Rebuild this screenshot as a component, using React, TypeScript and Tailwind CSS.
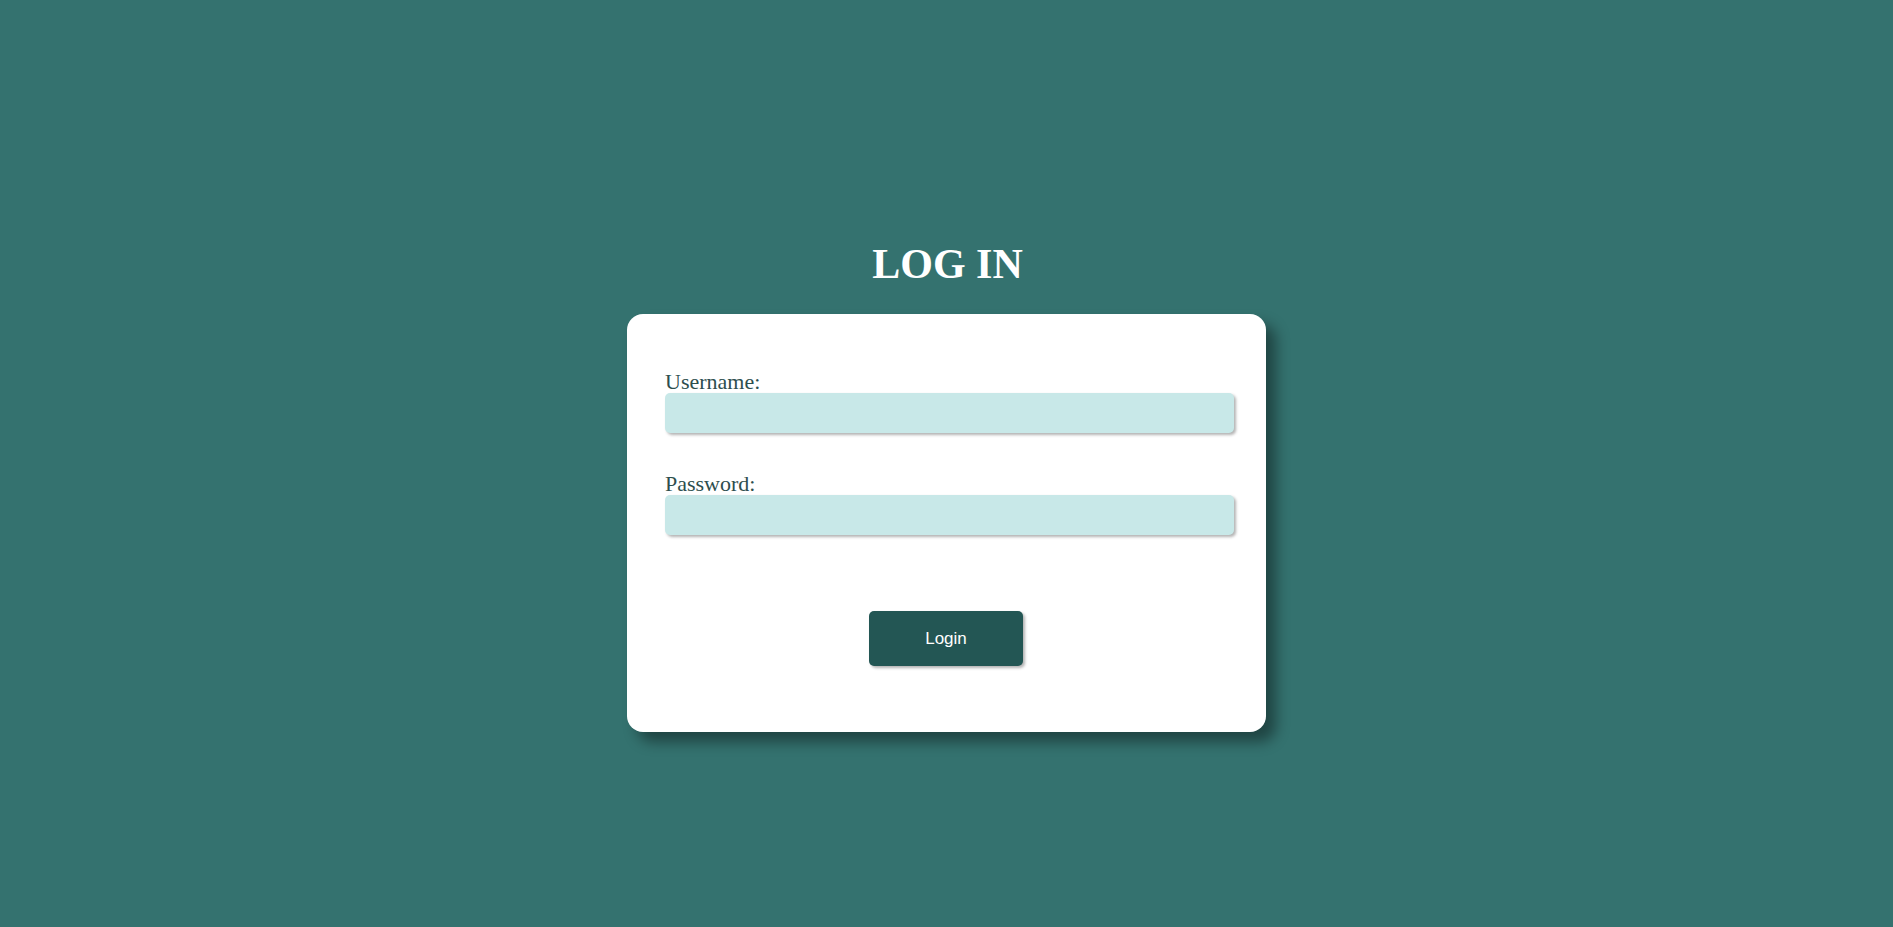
import { useState } from 'react'

export default function App() {
  const [username, setUsername] = useState('')
  const [password, setPassword] = useState('')

  return (
    <div
      className="min-h-screen w-full bg-[#34726f] flex flex-col items-center pt-[240px]"
      style={{ fontFamily: 'Georgia, "Liberation Serif", serif' }}
    >
      <h1 className="text-white font-bold text-[42px] leading-[48px] m-0 pl-[2px]">LOG IN</h1>

      <form
        className="mt-[26px] w-[639px] h-[418px] bg-white rounded-[16px] shadow-[10px_10px_14px_rgba(0,0,0,0.4)] pl-[38px] pr-[32px] pt-[56px] flex flex-col"
        onSubmit={(e) => e.preventDefault()}
      >
        <label className="text-[#2d4e4e] text-[22px] leading-[23px] block">Username:</label>
        <input
          type="text"
          value={username}
          onChange={(e) => setUsername(e.target.value)}
          className="w-full h-[40px] bg-[#c8e8e8] rounded-[5px] shadow-[2px_2px_3px_rgba(0,0,0,0.3)] outline-none px-3"
        />

        <label className="text-[#2d4e4e] text-[22px] leading-[23px] block mt-[39px]">Password:</label>
        <input
          type="password"
          value={password}
          onChange={(e) => setPassword(e.target.value)}
          className="w-full h-[40px] bg-[#c8e8e8] rounded-[5px] shadow-[2px_2px_3px_rgba(0,0,0,0.3)] outline-none px-3"
        />

        <div className="flex justify-center mt-[76px] pr-[7px]">
          <button
            type="submit"
            className="w-[154px] h-[55px] bg-[#235654] text-white text-[17px] rounded-[5px] shadow-[2px_2px_3px_rgba(0,0,0,0.3)]"
            style={{ fontFamily: 'Arial, "Liberation Sans", sans-serif' }}
          >
            Login
          </button>
        </div>
      </form>
    </div>
  )
}
